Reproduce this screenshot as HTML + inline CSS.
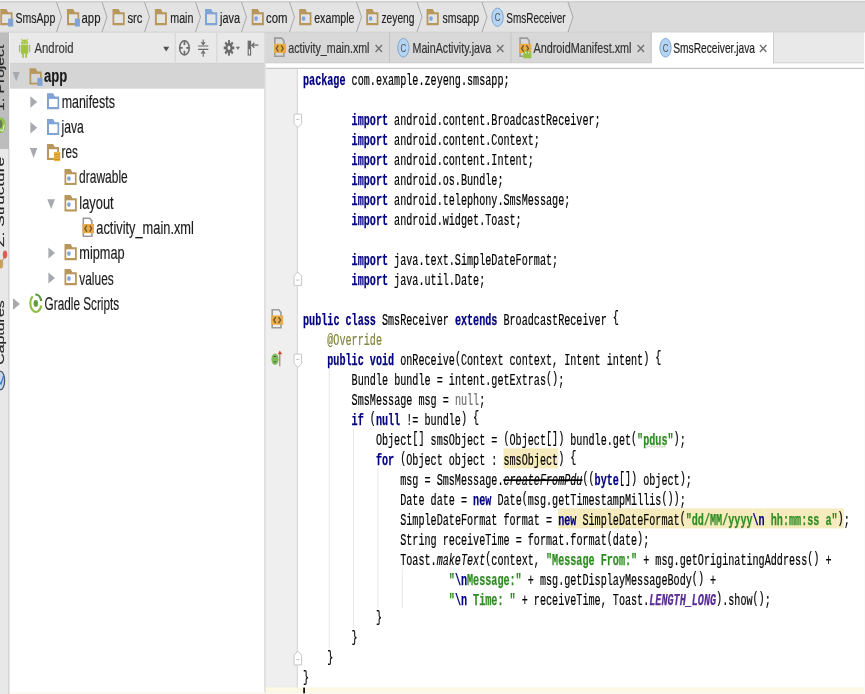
<!DOCTYPE html>
<html><head><meta charset="utf-8"><style>
html,body{margin:0;padding:0;width:865px;height:694px;overflow:hidden;background:#fff}
svg{display:block;filter:blur(0.35px)}
text{white-space:pre}
</style></head><body><svg width="865" height="694" viewBox="0 0 865 694"><rect x="0" y="0" width="865" height="694" fill="#ffffff" />
<rect x="0" y="0" width="865" height="32.5" fill="#dadada" />
<path d="M0 2.5 H567 L572.6 17.5 L567 32.5 H0 Z" fill="#e3e3e3"/>
<line x1="0" y1="0.6" x2="865" y2="0.6" stroke="#f2f2f2" stroke-width="1.2" />
<line x1="0" y1="1.9" x2="865" y2="1.9" stroke="#cdcdcd" stroke-width="1.2" />
<line x1="0" y1="32.3" x2="865" y2="32.3" stroke="#c6c6c6" stroke-width="1" />
<rect x="0" y="32.5" width="9" height="694" fill="#e8e8e8" />
<rect x="0" y="32.5" width="8.6" height="116.5" fill="#bdbdbd" />
<line x1="8.6" y1="32.5" x2="8.6" y2="149" stroke="#b4b4b4" stroke-width="0.9" />
<line x1="8.9" y1="149" x2="8.9" y2="694" stroke="#d2d2d2" stroke-width="1.5" />
<line x1="9.9" y1="32.5" x2="9.9" y2="694" stroke="#f0f0f0" stroke-width="0.8" />
<rect x="10" y="32.5" width="254.5" height="31" fill="#e9e9e9" />
<line x1="10" y1="63.4" x2="264.5" y2="63.4" stroke="#c8c8c8" stroke-width="1" />
<rect x="10" y="63.9" width="254.5" height="694" fill="#ffffff" />
<rect x="10" y="63.9" width="254.5" height="24.8" fill="#d5d5d5" />
<line x1="265" y1="32.5" x2="265" y2="694" stroke="#d4d4d4" stroke-width="1.5" />
<rect x="265.7" y="32.5" width="865" height="30.5" fill="#d8d8d8" />
<rect x="651.5" y="32.5" width="122" height="31" fill="#ffffff" />
<rect x="773.5" y="32.5" width="865" height="30.5" fill="#e9e9e9" />
<line x1="773.5" y1="63" x2="865" y2="63" stroke="#c8c8c8" stroke-width="1" />
<line x1="389.5" y1="32.5" x2="389.5" y2="63" stroke="#c4c4c4" stroke-width="1" />
<line x1="511" y1="32.5" x2="511" y2="63" stroke="#c4c4c4" stroke-width="1" />
<line x1="651.2" y1="32.5" x2="651.2" y2="63" stroke="#c4c4c4" stroke-width="1" />
<line x1="265.7" y1="63" x2="651.5" y2="63" stroke="#c8c8c8" stroke-width="1" />
<rect x="265.7" y="63.5" width="865" height="4.5" fill="#ffffff" />
<line x1="265.7" y1="68.3" x2="865" y2="68.3" stroke="#c6c6c6" stroke-width="1.3" />
<rect x="265.7" y="69" width="31.5" height="694" fill="#efefef" />
<line x1="297.3" y1="69" x2="297.3" y2="694" stroke="#d2d2d2" stroke-width="1" />
<rect x="265.7" y="687.5" width="865" height="5.2" fill="#fdf8e3" />
<rect x="265.7" y="692.7" width="865" height="2" fill="#fbfaf2" />
<rect x="10" y="692.3" width="255" height="1.7" fill="#fdfbef" />
<line x1="864.5" y1="32.5" x2="864.5" y2="694" stroke="#fbfbfb" stroke-width="1" />
<line x1="773.5" y1="32.5" x2="773.5" y2="63.5" stroke="#cdcdcd" stroke-width="1" />
<text x="15.50" y="22.7" textLength="39.80" lengthAdjust="spacingAndGlyphs" font-family="Liberation Sans" font-size="15.5" font-weight="normal" fill="#202020" stroke="#202020" stroke-width="0.15">SmsApp</text>
<text x="81.50" y="22.7" textLength="19.00" lengthAdjust="spacingAndGlyphs" font-family="Liberation Sans" font-size="15.5" font-weight="normal" fill="#202020" stroke="#202020" stroke-width="0.15">app</text>
<text x="127.50" y="22.7" textLength="15.00" lengthAdjust="spacingAndGlyphs" font-family="Liberation Sans" font-size="15.5" font-weight="normal" fill="#202020" stroke="#202020" stroke-width="0.15">src</text>
<text x="170.30" y="22.7" textLength="23.10" lengthAdjust="spacingAndGlyphs" font-family="Liberation Sans" font-size="15.5" font-weight="normal" fill="#202020" stroke="#202020" stroke-width="0.15">main</text>
<text x="220.10" y="22.7" textLength="20.10" lengthAdjust="spacingAndGlyphs" font-family="Liberation Sans" font-size="15.5" font-weight="normal" fill="#202020" stroke="#202020" stroke-width="0.15">java</text>
<text x="266.00" y="22.7" textLength="21.50" lengthAdjust="spacingAndGlyphs" font-family="Liberation Sans" font-size="15.5" font-weight="normal" fill="#202020" stroke="#202020" stroke-width="0.15">com</text>
<text x="314.20" y="22.7" textLength="40.30" lengthAdjust="spacingAndGlyphs" font-family="Liberation Sans" font-size="15.5" font-weight="normal" fill="#202020" stroke="#202020" stroke-width="0.15">example</text>
<text x="381.50" y="22.7" textLength="33.00" lengthAdjust="spacingAndGlyphs" font-family="Liberation Sans" font-size="15.5" font-weight="normal" fill="#202020" stroke="#202020" stroke-width="0.15">zeyeng</text>
<text x="442.50" y="22.7" textLength="36.70" lengthAdjust="spacingAndGlyphs" font-family="Liberation Sans" font-size="15.5" font-weight="normal" fill="#202020" stroke="#202020" stroke-width="0.15">smsapp</text>
<text x="506.30" y="22.7" textLength="59.20" lengthAdjust="spacingAndGlyphs" font-family="Liberation Sans" font-size="15.5" font-weight="normal" fill="#202020" stroke="#202020" stroke-width="0.15">SmsReceiver</text>
<polyline points="56.5,2 61.5,17 56.5,32" fill="none" stroke="#a8a8a8" stroke-width="1"/>
<polyline points="102.0,2 107.0,17 102.0,32" fill="none" stroke="#a8a8a8" stroke-width="1"/>
<polyline points="144.5,2 149.5,17 144.5,32" fill="none" stroke="#a8a8a8" stroke-width="1"/>
<polyline points="195.5,2 200.5,17 195.5,32" fill="none" stroke="#a8a8a8" stroke-width="1"/>
<polyline points="241.5,2 246.5,17 241.5,32" fill="none" stroke="#a8a8a8" stroke-width="1"/>
<polyline points="289.5,2 294.5,17 289.5,32" fill="none" stroke="#a8a8a8" stroke-width="1"/>
<polyline points="356.5,2 361.5,17 356.5,32" fill="none" stroke="#a8a8a8" stroke-width="1"/>
<polyline points="417.0,2 422.0,17 417.0,32" fill="none" stroke="#a8a8a8" stroke-width="1"/>
<polyline points="482.0,2 487.0,17 482.0,32" fill="none" stroke="#a8a8a8" stroke-width="1"/>
<polyline points="568.0,2 573.0,17 568.0,32" fill="none" stroke="#a8a8a8" stroke-width="1"/>
<path d="M0.3 9 H6.3999999999999995 L8.2 12.2 H12.5 V25.2 H0.3 Z M2.3 14.6 V23.0 H10.6 V14.6 Z" fill="#b7975c" fill-rule="evenodd"/>
<rect x="2.3" y="14.6" width="8.299999999999999" height="8.399999999999999" fill="#e4e4e4"/>
<rect x="8.1" y="18.6" width="5.1" height="7.9" fill="#7ea3d4"/>
<path d="M67 9 H73.1 L74.89999999999999 12.2 H79.2 V25.2 H67 Z M69 14.6 V23.0 H77.3 V14.6 Z" fill="#b7975c" fill-rule="evenodd"/>
<rect x="69" y="14.6" width="8.299999999999999" height="8.399999999999999" fill="#e4e4e4"/>
<rect x="74.8" y="18.6" width="5.1" height="7.9" fill="#7ea3d4"/>
<path d="M112.5 9 H118.6 L120.39999999999999 12.2 H124.7 V25.2 H112.5 Z M114.5 14.6 V23.0 H122.8 V14.6 Z" fill="#b7975c" fill-rule="evenodd"/>
<rect x="114.5" y="14.6" width="8.299999999999999" height="8.399999999999999" fill="#e4e4e4"/>
<path d="M154.9 9 H160.9 L162.70000000000002 12.2 H166.9 V25.2 H154.9 Z M156.9 14.6 V23.0 H165.0 V14.6 Z" fill="#b7975c" fill-rule="evenodd"/>
<rect x="156.9" y="14.6" width="8.1" height="8.399999999999999" fill="#e4e4e4"/>
<path d="M205 9 H211.1 L212.9 12.2 H217.2 V25.2 H205 Z M207 14.6 V23.0 H215.29999999999998 V14.6 Z" fill="#7ea3d4" fill-rule="evenodd"/>
<rect x="207" y="14.6" width="8.299999999999999" height="8.399999999999999" fill="#e4e4e4"/>
<path d="M251.7 9 H257.8 L259.6 12.2 H263.9 V25.2 H251.7 Z M253.7 14.6 V23.0 H262.0 V14.6 Z" fill="#b7975c" fill-rule="evenodd"/>
<rect x="253.7" y="14.6" width="8.299999999999999" height="8.399999999999999" fill="#e4e4e4"/>
<ellipse cx="256.09999999999997" cy="18.6" rx="1.8" ry="2.4" fill="#7fa6dc"/>
<path d="M299.2 9 H305.3 L307.1 12.2 H311.4 V25.2 H299.2 Z M301.2 14.6 V23.0 H309.5 V14.6 Z" fill="#b7975c" fill-rule="evenodd"/>
<rect x="301.2" y="14.6" width="8.299999999999999" height="8.399999999999999" fill="#e4e4e4"/>
<ellipse cx="303.59999999999997" cy="18.6" rx="1.8" ry="2.4" fill="#7fa6dc"/>
<path d="M366.2 9 H372.3 L374.1 12.2 H378.4 V25.2 H366.2 Z M368.2 14.6 V23.0 H376.5 V14.6 Z" fill="#b7975c" fill-rule="evenodd"/>
<rect x="368.2" y="14.6" width="8.299999999999999" height="8.399999999999999" fill="#e4e4e4"/>
<ellipse cx="370.59999999999997" cy="18.6" rx="1.8" ry="2.4" fill="#7fa6dc"/>
<path d="M426.6 9 H432.70000000000005 L434.50000000000006 12.2 H438.8 V25.2 H426.6 Z M428.6 14.6 V23.0 H436.90000000000003 V14.6 Z" fill="#b7975c" fill-rule="evenodd"/>
<rect x="428.6" y="14.6" width="8.299999999999999" height="8.399999999999999" fill="#e4e4e4"/>
<ellipse cx="431.0" cy="18.6" rx="1.8" ry="2.4" fill="#7fa6dc"/>
<ellipse cx="497.5" cy="17.25" rx="5.700000000000022" ry="9.15" fill="#b4d4f3" stroke="#80a6d4" stroke-width="1"/>
<text x="497.5" y="21.15" text-anchor="middle" font-family="Liberation Sans" font-size="11" fill="#505050" transform="translate(497.5 0) scale(0.72 1) translate(-497.5 0)">C</text>
<text x="34.50" y="53.2" textLength="39.10" lengthAdjust="spacingAndGlyphs" font-family="Liberation Sans" font-size="15" font-weight="normal" fill="#3a3a3a" stroke="#3a3a3a" stroke-width="0.2">Android</text>
<path d="M20.9 43.800000000000004 Q21.099999999999998 39.4 24.549999999999997 39.4 Q28.0 39.4 28.2 43.800000000000004 Z" fill="#a2c43f"/>
<path d="M22.099999999999998 40.300000000000004 L21.299999999999997 38.5 M27.0 40.300000000000004 L27.799999999999997 38.5" stroke="#a2c43f" stroke-width="0.8"/>
<circle cx="23.099999999999998" cy="41.7" r="0.6" fill="#d9e6b0"/><circle cx="26.0" cy="41.7" r="0.6" fill="#d9e6b0"/>
<rect x="20.9" y="44.6" width="7.3" height="9.1" fill="#a2c43f"/>
<rect x="18.9" y="44.800000000000004" width="1.3" height="7.2" rx="0.6" fill="#a2c43f"/>
<rect x="28.9" y="44.800000000000004" width="1.3" height="7.2" rx="0.6" fill="#a2c43f"/>
<rect x="22.2" y="53.1" width="1.7" height="4.7" fill="#a2c43f"/>
<rect x="25.299999999999997" y="53.1" width="1.7" height="4.7" fill="#a2c43f"/>
<path d="M163.2 46.8 H169.2 L166.2 51.6 Z" fill="#505050"/>
<line x1="175.2" y1="33" x2="175.2" y2="62.5" stroke="#d3d3d3" stroke-width="1" />
<line x1="216.8" y1="33" x2="216.8" y2="62.5" stroke="#d3d3d3" stroke-width="1" />
<ellipse cx="184.45" cy="47.9" rx="4.8" ry="7.1" fill="none" stroke="#6b6b6b" stroke-width="1.5"/>
<path d="M184.45 41 V45 M184.45 50.8 V54.8 M179.8 47.9 H182.6 M186.3 47.9 H189.1" stroke="#6b6b6b" stroke-width="1.7"/>
<path d="M198.1 46 H208.3 M198.1 49.4 H208.3" stroke="#6b6b6b" stroke-width="1.2"/>
<path d="M203.2 39.5 V44 M201.3 42.2 L203.2 44.6 L205.1 42.2 M203.2 56.7 V51.4 M201.3 53.6 L203.2 51 L205.1 53.6" stroke="#6b6b6b" stroke-width="1.1" fill="none"/>
<g transform="translate(229 47.9) scale(0.68 1)"><circle r="5.2" fill="#6b6b6b"/><rect x="-1.4" y="-7.8" width="2.8" height="3.5" fill="#6b6b6b" transform="rotate(0)"/><rect x="-1.4" y="-7.8" width="2.8" height="3.5" fill="#6b6b6b" transform="rotate(45)"/><rect x="-1.4" y="-7.8" width="2.8" height="3.5" fill="#6b6b6b" transform="rotate(90)"/><rect x="-1.4" y="-7.8" width="2.8" height="3.5" fill="#6b6b6b" transform="rotate(135)"/><rect x="-1.4" y="-7.8" width="2.8" height="3.5" fill="#6b6b6b" transform="rotate(180)"/><rect x="-1.4" y="-7.8" width="2.8" height="3.5" fill="#6b6b6b" transform="rotate(225)"/><rect x="-1.4" y="-7.8" width="2.8" height="3.5" fill="#6b6b6b" transform="rotate(270)"/><rect x="-1.4" y="-7.8" width="2.8" height="3.5" fill="#6b6b6b" transform="rotate(315)"/><circle r="2.1" fill="#e9e9e9"/></g>
<path d="M235.8 46.8 H240 L237.9 49.7 Z" fill="#6b6b6b"/>
<rect x="248.2" y="41.2" width="2.4" height="13.8" fill="none" stroke="#6b6b6b" stroke-width="1.1"/>
<rect x="248.2" y="41.2" width="2.4" height="8" fill="#6b6b6b"/>
<path d="M251.8 45.2 H258.4 M254.4 42.7 L251.8 45.2 L254.4 47.7" stroke="#6b6b6b" stroke-width="1.2" fill="none"/>
<text transform="translate(4.3 111) rotate(-90) scale(1 0.78)" textLength="66.3" lengthAdjust="spacingAndGlyphs" font-family="Liberation Sans" font-size="15" fill="#262626" stroke="#262626" stroke-width="0.2">1: Project</text>
<text transform="translate(4.3 246.9) rotate(-90) scale(1 0.78)" textLength="89.9" lengthAdjust="spacingAndGlyphs" font-family="Liberation Sans" font-size="15" fill="#262626" stroke="#262626" stroke-width="0.2">Z: Structure</text>
<text transform="translate(4.3 364.8) rotate(-90) scale(1 0.78)" textLength="64.5" lengthAdjust="spacingAndGlyphs" font-family="Liberation Sans" font-size="15" fill="#262626" stroke="#262626" stroke-width="0.2">Captures</text>
<ellipse cx="1.3" cy="125.2" rx="4.3" ry="7.8" fill="#8cc04c"/><ellipse cx="0.3" cy="124" rx="2" ry="4" fill="#6a7a5a"/><path d="M-0.5 129.5 L2.8 131 L4.3 124.5" fill="none" stroke="#f2f2f2" stroke-width="1"/>
<path d="M5 254 L1.5 264" stroke="#a08060" stroke-width="0.8"/><ellipse cx="5" cy="254.5" rx="2.2" ry="4" fill="#d8614e"/><ellipse cx="1" cy="264" rx="2.2" ry="4.5" fill="#caa060"/>
<ellipse cx="0.6" cy="380.5" rx="4" ry="9.2" fill="#c9d9ee" stroke="#4e5a6a" stroke-width="1.3"/><path d="M-1 381 L1 384 L3.5 376" fill="none" stroke="#3d78c8" stroke-width="1.2"/>
<text x="288.20" y="53.3" textLength="81.30" lengthAdjust="spacingAndGlyphs" font-family="Liberation Sans" font-size="15" font-weight="normal" fill="#333333" stroke="#333333" stroke-width="0.2">activity_main.xml</text>
<path d="M375.6 45 L382.0 52 M382.0 45 L375.6 52" stroke="#707070" stroke-width="1.35"/>
<text x="412.50" y="53.3" textLength="78.80" lengthAdjust="spacingAndGlyphs" font-family="Liberation Sans" font-size="15" font-weight="normal" fill="#333333" stroke="#333333" stroke-width="0.2">MainActivity.java</text>
<path d="M497 45 L503.4 52 M503.4 45 L497 52" stroke="#707070" stroke-width="1.35"/>
<text x="533.50" y="53.3" textLength="98.00" lengthAdjust="spacingAndGlyphs" font-family="Liberation Sans" font-size="15" font-weight="normal" fill="#333333" stroke="#333333" stroke-width="0.2">AndroidManifest.xml</text>
<path d="M637.6 45 L644.0 52 M644.0 45 L637.6 52" stroke="#707070" stroke-width="1.35"/>
<text x="673.30" y="53.3" textLength="81.70" lengthAdjust="spacingAndGlyphs" font-family="Liberation Sans" font-size="15" font-weight="normal" fill="#1e1e1e" stroke="#1e1e1e" stroke-width="0.2">SmsReceiver.java</text>
<path d="M760 45 L766.4 52 M766.4 45 L760 52" stroke="#707070" stroke-width="1.35"/>
<path d="M274.8 38.099999999999994 H281.7 L283.9 40.8 V56.3 H274.8 Z" fill="#d8d8d8" stroke="#9b9b9b" stroke-width="1.6"/>
<rect x="274" y="43.8" width="12.0" height="9.2" fill="#e9ab45"/>
<path d="M278.3 45.3 L276.3 48.4 L278.3 51.5 M281.2 45.3 L283.2 48.4 L281.2 51.5" fill="none" stroke="#6b5330" stroke-width="1.3"/>
<ellipse cx="403.4" cy="47.75" rx="5.6" ry="9.35" fill="#b4d4f3" stroke="#80a6d4" stroke-width="1"/>
<text x="403.4" y="51.65" text-anchor="middle" font-family="Liberation Sans" font-size="11" fill="#505050" transform="translate(403.4 0) scale(0.72 1) translate(-403.4 0)">C</text>
<path d="M520.0999999999999 38.099999999999994 H527.0 L529.1999999999999 40.8 V56.3 H520.0999999999999 Z" fill="#d8d8d8" stroke="#9b9b9b" stroke-width="1.6"/>
<rect x="519.3" y="43.8" width="12.0" height="9.2" fill="#e9ab45"/>
<path d="M523.5999999999999 45.3 L521.5999999999999 48.4 L523.5999999999999 51.5 M526.5 45.3 L528.5 48.4 L526.5 51.5" fill="none" stroke="#6b5330" stroke-width="1.3"/>
<path d="M523.3 58.3 V52.8 Q527.3 48.099999999999994 531.3 52.8 V58.3 Z" fill="#94c240"/>
<path d="M524.3 49.8 L523.5 48.5 M530.3 49.8 L531.0999999999999 48.5" stroke="#94c240" stroke-width="1"/>
<circle cx="525.8" cy="52.8" r="0.8" fill="#e8f0d8"/><circle cx="528.8" cy="52.8" r="0.8" fill="#e8f0d8"/>
<ellipse cx="665.5" cy="47.75" rx="5.6" ry="9.35" fill="#b4d4f3" stroke="#80a6d4" stroke-width="1"/>
<text x="665.5" y="51.65" text-anchor="middle" font-family="Liberation Sans" font-size="11" fill="#505050" transform="translate(665.5 0) scale(0.72 1) translate(-665.5 0)">C</text>
<text x="44.00" y="82.3" textLength="23.30" lengthAdjust="spacingAndGlyphs" font-family="Liberation Sans" font-size="17.5" font-weight="bold" fill="#1a1a1a" stroke="#1a1a1a" stroke-width="0.15">app</text>
<text x="61.70" y="107.58" textLength="53.20" lengthAdjust="spacingAndGlyphs" font-family="Liberation Sans" font-size="17.5" font-weight="normal" fill="#1a1a1a" stroke="#1a1a1a" stroke-width="0.15">manifests</text>
<text x="61.50" y="132.86" textLength="22.40" lengthAdjust="spacingAndGlyphs" font-family="Liberation Sans" font-size="17.5" font-weight="normal" fill="#1a1a1a" stroke="#1a1a1a" stroke-width="0.15">java</text>
<text x="61.50" y="158.14" textLength="16.30" lengthAdjust="spacingAndGlyphs" font-family="Liberation Sans" font-size="17.5" font-weight="normal" fill="#1a1a1a" stroke="#1a1a1a" stroke-width="0.15">res</text>
<text x="79.10" y="183.42000000000002" textLength="48.70" lengthAdjust="spacingAndGlyphs" font-family="Liberation Sans" font-size="17.5" font-weight="normal" fill="#1a1a1a" stroke="#1a1a1a" stroke-width="0.15">drawable</text>
<text x="79.30" y="208.7" textLength="34.40" lengthAdjust="spacingAndGlyphs" font-family="Liberation Sans" font-size="17.5" font-weight="normal" fill="#1a1a1a" stroke="#1a1a1a" stroke-width="0.15">layout</text>
<text x="96.30" y="233.98000000000002" textLength="97.60" lengthAdjust="spacingAndGlyphs" font-family="Liberation Sans" font-size="17.5" font-weight="normal" fill="#1a1a1a" stroke="#1a1a1a" stroke-width="0.15">activity_main.xml</text>
<text x="79.30" y="259.26" textLength="45.40" lengthAdjust="spacingAndGlyphs" font-family="Liberation Sans" font-size="17.5" font-weight="normal" fill="#1a1a1a" stroke="#1a1a1a" stroke-width="0.15">mipmap</text>
<text x="79.30" y="284.54" textLength="34.40" lengthAdjust="spacingAndGlyphs" font-family="Liberation Sans" font-size="17.5" font-weight="normal" fill="#1a1a1a" stroke="#1a1a1a" stroke-width="0.15">values</text>
<text x="44.60" y="309.82" textLength="74.60" lengthAdjust="spacingAndGlyphs" font-family="Liberation Sans" font-size="17.5" font-weight="normal" fill="#1a1a1a" stroke="#1a1a1a" stroke-width="0.15">Gradle Scripts</text>
<path d="M12.7 72 H19.7 L16.2 81.4 Z" fill="#a6a9ae"/>
<path d="M29.5 68.3 H35.65 L37.449999999999996 71.5 H41.8 V84.6 H29.5 Z M31.5 73.89999999999999 V82.39999999999999 H39.9 V73.89999999999999 Z" fill="#b7975c" fill-rule="evenodd"/>
<rect x="31.5" y="73.89999999999999" width="8.4" height="8.5" fill="#d5d5d5"/>
<rect x="37.4" y="77.89999999999999" width="5.1" height="7.9" fill="#7ea3d4"/>
<path d="M30.4 96.3 L37.2 102.0 L30.4 107.7 Z" fill="#a6a9ae"/>
<path d="M47 93.3 H53.1 L54.9 96.5 H59.2 V109.2 H47 Z M49 98.89999999999999 V107.0 H57.300000000000004 V98.89999999999999 Z" fill="#7ea3d4" fill-rule="evenodd"/>
<rect x="49" y="98.89999999999999" width="8.299999999999999" height="8.100000000000001" fill="#fff"/>
<path d="M30.4 122 L37.2 127.7 L30.4 133.4 Z" fill="#a6a9ae"/>
<path d="M47 119 H53.1 L54.9 122.2 H59.2 V135 H47 Z M49 124.6 V132.8 H57.300000000000004 V124.6 Z" fill="#7ea3d4" fill-rule="evenodd"/>
<rect x="49" y="124.6" width="8.299999999999999" height="8.2" fill="#fff"/>
<path d="M29.9 148.1 H37.3 L33.599999999999994 158 Z" fill="#a6a9ae"/>
<path d="M47 143.9 H53.0 L54.8 147.1 H59 V159.9 H47 Z M49 149.5 V157.70000000000002 H57.1 V149.5 Z" fill="#b7975c" fill-rule="evenodd"/>
<rect x="49" y="149.5" width="8.1" height="8.2" fill="#fff"/>
<rect x="54" y="151.9" width="6.3" height="9.2" fill="#eeb040"/>
<path d="M54.5 154.4 h5.5 M54.5 156.9 h5.5 M54.5 159.4 h5.5" stroke="#b98a30" stroke-width="0.8"/>
<path d="M64.5 169 H70.55 L72.35 172.2 H76.6 V184.9 H64.5 Z M66.5 174.6 V182.70000000000002 H74.69999999999999 V174.6 Z" fill="#b7975c" fill-rule="evenodd"/>
<rect x="66.5" y="174.6" width="8.2" height="8.100000000000001" fill="#fff"/>
<ellipse cx="68.9" cy="178.6" rx="1.8" ry="2.4" fill="#7fa6dc"/>
<path d="M47.3 199.3 H55 L51.15 209 Z" fill="#a6a9ae"/>
<path d="M64.5 195 H70.65 L72.45 198.2 H76.8 V211.4 H64.5 Z M66.5 200.6 V209.20000000000002 H74.89999999999999 V200.6 Z" fill="#b7975c" fill-rule="evenodd"/>
<rect x="66.5" y="200.6" width="8.4" height="8.599999999999998" fill="#fff"/>
<ellipse cx="68.9" cy="204.6" rx="1.8" ry="2.4" fill="#7fa6dc"/>
<path d="M83.3 218.3 H89.7 L91.9 221.0 V236.2 H83.3 Z" fill="#fff" stroke="#9b9b9b" stroke-width="1.6"/>
<rect x="82.5" y="224.0" width="11.5" height="9.2" fill="#e9ab45"/>
<path d="M86.8 225.5 L84.8 228.6 L86.8 231.7 M89.7 225.5 L91.7 228.6 L89.7 231.7" fill="none" stroke="#6b5330" stroke-width="1.3"/>
<path d="M48.4 247.5 L55 253.0 L48.4 258.5 Z" fill="#a6a9ae"/>
<path d="M64.5 244 H70.65 L72.45 247.2 H76.8 V260.2 H64.5 Z M66.5 249.6 V258.0 H74.89999999999999 V249.6 Z" fill="#b7975c" fill-rule="evenodd"/>
<rect x="66.5" y="249.6" width="8.4" height="8.399999999999999" fill="#fff"/>
<ellipse cx="68.9" cy="253.6" rx="1.8" ry="2.4" fill="#7fa6dc"/>
<path d="M48.4 272.5 L55 278.0 L48.4 283.5 Z" fill="#a6a9ae"/>
<path d="M64.5 269 H70.65 L72.45 272.2 H76.8 V285.2 H64.5 Z M66.5 274.6 V283.0 H74.89999999999999 V274.6 Z" fill="#b7975c" fill-rule="evenodd"/>
<rect x="66.5" y="274.6" width="8.4" height="8.399999999999999" fill="#fff"/>
<ellipse cx="68.9" cy="278.6" rx="1.8" ry="2.4" fill="#7fa6dc"/>
<path d="M13 298.3 L20 304.05 L13 309.8 Z" fill="#a6a9ae"/>
<path d="M35.41 294.68 A5.6 8.6 0 0 1 41.31 301.02" fill="none" stroke="#5a9a3a" stroke-width="2.3"/>
<path d="M41.31 305.48 A5.6 8.6 0 1 1 32.69 296.21" fill="none" stroke="#8cbf44" stroke-width="2.1"/>
<ellipse cx="35.8" cy="303.4" rx="2.2" ry="3.4" fill="#5e9e3c"/>
<path d="M272.2 309.8 H278.79999999999995 L280.99999999999994 312.5 V327.8 H272.2 Z" fill="#efefef" stroke="#9b9b9b" stroke-width="1.6"/>
<rect x="271.4" y="315.5" width="11.7" height="9.2" fill="#e9ab45"/>
<path d="M275.7 317 L273.7 320.1 L275.7 323.2 M278.59999999999997 317 L280.59999999999997 320.1 L278.59999999999997 323.2" fill="none" stroke="#6b5330" stroke-width="1.3"/>
<ellipse cx="275" cy="359.3" rx="3.6" ry="5.7" fill="#7dbb5a"/>
<path d="M273.7 356.5 h2.6 M273.7 361.8 h2.6" stroke="#555" stroke-width="1"/>
<rect x="279.1" y="353.5" width="1.3" height="12.8" fill="#b08878"/>
<path d="M277.8 354.2 L279.75 350.6 L282.3 354.2 Z" fill="#d44a3a"/>
<path d="M294.1 114.1 H301.6 V123.5 L297.85 127.7 L294.1 123.5 Z" fill="#fff" stroke="#c8c8c8" stroke-width="1"/>
<line x1="296.3" y1="119.39999999999999" x2="299.40000000000003" y2="119.39999999999999" stroke="#c0c0c0" stroke-width="1"/>
<path d="M294.1 285.4 H301.6 V276.0 L297.85 271.8 L294.1 276.0 Z" fill="#fff" stroke="#c8c8c8" stroke-width="1"/>
<line x1="296.3" y1="280.09999999999997" x2="299.40000000000003" y2="280.09999999999997" stroke="#c0c0c0" stroke-width="1"/>
<path d="M294.1 354.1 H301.6 V363.3 L297.85 367.5 L294.1 363.3 Z" fill="#fff" stroke="#c8c8c8" stroke-width="1"/>
<line x1="296.3" y1="359.40000000000003" x2="299.40000000000003" y2="359.40000000000003" stroke="#c0c0c0" stroke-width="1"/>
<path d="M294.1 664.9 H301.6 V655.2 L297.85 651 L294.1 655.2 Z" fill="#fff" stroke="#c8c8c8" stroke-width="1"/>
<line x1="296.3" y1="659.6" x2="299.40000000000003" y2="659.6" stroke="#c0c0c0" stroke-width="1"/>
<line x1="329.3" y1="368.4" x2="329.3" y2="648.4" stroke="#e6e6e6" stroke-width="1" />
<line x1="353.6" y1="428.4" x2="353.6" y2="628.4" stroke="#e6e6e6" stroke-width="1" />
<line x1="377.9" y1="468.4" x2="377.9" y2="608.4" stroke="#e6e6e6" stroke-width="1" />
<line x1="402.2" y1="568.4" x2="402.2" y2="608.4" stroke="#e6e6e6" stroke-width="1" />
<text x="303.00" y="84.50" textLength="42.52" lengthAdjust="spacingAndGlyphs" font-family="Liberation Mono" font-size="16" fill="#000080" stroke="#000080" stroke-width="0.25" font-weight="bold" xml:space="preserve">package</text>
<text x="345.52" y="84.50" textLength="164.03" lengthAdjust="spacingAndGlyphs" font-family="Liberation Mono" font-size="16" fill="#000" stroke="#000" stroke-width="0.2"  xml:space="preserve"> com.example.zeyeng.smsapp;</text>
<text x="351.60" y="124.50" textLength="36.45" lengthAdjust="spacingAndGlyphs" font-family="Liberation Mono" font-size="16" fill="#000080" stroke="#000080" stroke-width="0.25" font-weight="bold" xml:space="preserve">import</text>
<text x="388.05" y="124.50" textLength="212.62" lengthAdjust="spacingAndGlyphs" font-family="Liberation Mono" font-size="16" fill="#000" stroke="#000" stroke-width="0.2"  xml:space="preserve"> android.content.BroadcastReceiver;</text>
<text x="351.60" y="144.50" textLength="36.45" lengthAdjust="spacingAndGlyphs" font-family="Liberation Mono" font-size="16" fill="#000080" stroke="#000080" stroke-width="0.25" font-weight="bold" xml:space="preserve">import</text>
<text x="388.05" y="144.50" textLength="151.88" lengthAdjust="spacingAndGlyphs" font-family="Liberation Mono" font-size="16" fill="#000" stroke="#000" stroke-width="0.2"  xml:space="preserve"> android.content.Context;</text>
<text x="351.60" y="164.50" textLength="36.45" lengthAdjust="spacingAndGlyphs" font-family="Liberation Mono" font-size="16" fill="#000080" stroke="#000080" stroke-width="0.25" font-weight="bold" xml:space="preserve">import</text>
<text x="388.05" y="164.50" textLength="145.80" lengthAdjust="spacingAndGlyphs" font-family="Liberation Mono" font-size="16" fill="#000" stroke="#000" stroke-width="0.2"  xml:space="preserve"> android.content.Intent;</text>
<text x="351.60" y="184.50" textLength="36.45" lengthAdjust="spacingAndGlyphs" font-family="Liberation Mono" font-size="16" fill="#000080" stroke="#000080" stroke-width="0.25" font-weight="bold" xml:space="preserve">import</text>
<text x="388.05" y="184.50" textLength="115.42" lengthAdjust="spacingAndGlyphs" font-family="Liberation Mono" font-size="16" fill="#000" stroke="#000" stroke-width="0.2"  xml:space="preserve"> android.os.Bundle;</text>
<text x="351.60" y="204.50" textLength="36.45" lengthAdjust="spacingAndGlyphs" font-family="Liberation Mono" font-size="16" fill="#000080" stroke="#000080" stroke-width="0.25" font-weight="bold" xml:space="preserve">import</text>
<text x="388.05" y="204.50" textLength="182.25" lengthAdjust="spacingAndGlyphs" font-family="Liberation Mono" font-size="16" fill="#000" stroke="#000" stroke-width="0.2"  xml:space="preserve"> android.telephony.SmsMessage;</text>
<text x="351.60" y="224.50" textLength="36.45" lengthAdjust="spacingAndGlyphs" font-family="Liberation Mono" font-size="16" fill="#000080" stroke="#000080" stroke-width="0.25" font-weight="bold" xml:space="preserve">import</text>
<text x="388.05" y="224.50" textLength="133.65" lengthAdjust="spacingAndGlyphs" font-family="Liberation Mono" font-size="16" fill="#000" stroke="#000" stroke-width="0.2"  xml:space="preserve"> android.widget.Toast;</text>
<text x="351.60" y="264.50" textLength="36.45" lengthAdjust="spacingAndGlyphs" font-family="Liberation Mono" font-size="16" fill="#000080" stroke="#000080" stroke-width="0.25" font-weight="bold" xml:space="preserve">import</text>
<text x="388.05" y="264.50" textLength="170.10" lengthAdjust="spacingAndGlyphs" font-family="Liberation Mono" font-size="16" fill="#000" stroke="#000" stroke-width="0.2"  xml:space="preserve"> java.text.SimpleDateFormat;</text>
<text x="351.60" y="284.50" textLength="36.45" lengthAdjust="spacingAndGlyphs" font-family="Liberation Mono" font-size="16" fill="#000080" stroke="#000080" stroke-width="0.25" font-weight="bold" xml:space="preserve">import</text>
<text x="388.05" y="284.50" textLength="97.20" lengthAdjust="spacingAndGlyphs" font-family="Liberation Mono" font-size="16" fill="#000" stroke="#000" stroke-width="0.2"  xml:space="preserve"> java.util.Date;</text>
<text x="303.00" y="324.50" textLength="36.45" lengthAdjust="spacingAndGlyphs" font-family="Liberation Mono" font-size="16" fill="#000080" stroke="#000080" stroke-width="0.25" font-weight="bold" xml:space="preserve">public</text>
<text x="345.52" y="324.50" textLength="30.38" lengthAdjust="spacingAndGlyphs" font-family="Liberation Mono" font-size="16" fill="#000080" stroke="#000080" stroke-width="0.25" font-weight="bold" xml:space="preserve">class</text>
<text x="375.90" y="324.50" textLength="78.98" lengthAdjust="spacingAndGlyphs" font-family="Liberation Mono" font-size="16" fill="#000" stroke="#000" stroke-width="0.2"  xml:space="preserve"> SmsReceiver </text>
<text x="454.88" y="324.50" textLength="42.52" lengthAdjust="spacingAndGlyphs" font-family="Liberation Mono" font-size="16" fill="#000080" stroke="#000080" stroke-width="0.25" font-weight="bold" xml:space="preserve">extends</text>
<text x="497.40" y="324.50" textLength="121.50" lengthAdjust="spacingAndGlyphs" font-family="Liberation Mono" font-size="16" fill="#000" stroke="#000" stroke-width="0.2"  xml:space="preserve"> BroadcastReceiver  </text>
<text x="612.82" y="322.10" textLength="6.08" lengthAdjust="spacingAndGlyphs" font-family="Liberation Mono" font-size="16" fill="#000" stroke="#000" stroke-width="0.2" >{</text>
<text x="327.30" y="344.50" textLength="54.68" lengthAdjust="spacingAndGlyphs" font-family="Liberation Mono" font-size="16" fill="#80863a" stroke="#80863a" stroke-width="0.2"  xml:space="preserve">@Override</text>
<text x="327.30" y="364.50" textLength="36.45" lengthAdjust="spacingAndGlyphs" font-family="Liberation Mono" font-size="16" fill="#000080" stroke="#000080" stroke-width="0.25" font-weight="bold" xml:space="preserve">public</text>
<text x="369.82" y="364.50" textLength="24.30" lengthAdjust="spacingAndGlyphs" font-family="Liberation Mono" font-size="16" fill="#000080" stroke="#000080" stroke-width="0.25" font-weight="bold" xml:space="preserve">void</text>
<text x="394.12" y="364.50" textLength="267.30" lengthAdjust="spacingAndGlyphs" font-family="Liberation Mono" font-size="16" fill="#000" stroke="#000" stroke-width="0.2"  xml:space="preserve"> onReceive Context context, Intent intent   </text>
<text x="454.88" y="363.00" textLength="6.08" lengthAdjust="spacingAndGlyphs" font-family="Liberation Mono" font-size="16" fill="#000" stroke="#000" stroke-width="0.2" >(</text>
<text x="643.20" y="363.00" textLength="6.08" lengthAdjust="spacingAndGlyphs" font-family="Liberation Mono" font-size="16" fill="#000" stroke="#000" stroke-width="0.2" >)</text>
<text x="655.35" y="362.10" textLength="6.08" lengthAdjust="spacingAndGlyphs" font-family="Liberation Mono" font-size="16" fill="#000" stroke="#000" stroke-width="0.2" >{</text>
<text x="303.00" y="384.50" textLength="261.23" lengthAdjust="spacingAndGlyphs" font-family="Liberation Mono" font-size="16" fill="#000" stroke="#000" stroke-width="0.2"  xml:space="preserve">        Bundle bundle = intent.getExtras  ;</text>
<text x="546.00" y="383.00" textLength="6.08" lengthAdjust="spacingAndGlyphs" font-family="Liberation Mono" font-size="16" fill="#000" stroke="#000" stroke-width="0.2" >(</text>
<text x="552.08" y="383.00" textLength="6.08" lengthAdjust="spacingAndGlyphs" font-family="Liberation Mono" font-size="16" fill="#000" stroke="#000" stroke-width="0.2" >)</text>
<text x="303.00" y="404.50" textLength="151.88" lengthAdjust="spacingAndGlyphs" font-family="Liberation Mono" font-size="16" fill="#000" stroke="#000" stroke-width="0.2"  xml:space="preserve">        SmsMessage msg = </text>
<text x="454.88" y="404.50" textLength="24.30" lengthAdjust="spacingAndGlyphs" font-family="Liberation Mono" font-size="16" fill="#6f6f6f" stroke="#6f6f6f" stroke-width="0.2"  xml:space="preserve">null</text>
<text x="479.18" y="404.50" textLength="6.08" lengthAdjust="spacingAndGlyphs" font-family="Liberation Mono" font-size="16" fill="#000" stroke="#000" stroke-width="0.2"  xml:space="preserve">;</text>
<text x="351.60" y="424.50" textLength="12.15" lengthAdjust="spacingAndGlyphs" font-family="Liberation Mono" font-size="16" fill="#000080" stroke="#000080" stroke-width="0.25" font-weight="bold" xml:space="preserve">if</text>
<text x="369.82" y="423.00" textLength="6.08" lengthAdjust="spacingAndGlyphs" font-family="Liberation Mono" font-size="16" fill="#000" stroke="#000" stroke-width="0.2" >(</text>
<text x="375.90" y="424.50" textLength="24.30" lengthAdjust="spacingAndGlyphs" font-family="Liberation Mono" font-size="16" fill="#000080" stroke="#000080" stroke-width="0.25" font-weight="bold" xml:space="preserve">null</text>
<text x="400.20" y="424.50" textLength="78.98" lengthAdjust="spacingAndGlyphs" font-family="Liberation Mono" font-size="16" fill="#000" stroke="#000" stroke-width="0.2"  xml:space="preserve"> != bundle   </text>
<text x="460.95" y="423.00" textLength="6.08" lengthAdjust="spacingAndGlyphs" font-family="Liberation Mono" font-size="16" fill="#000" stroke="#000" stroke-width="0.2" >)</text>
<text x="473.10" y="422.10" textLength="6.08" lengthAdjust="spacingAndGlyphs" font-family="Liberation Mono" font-size="16" fill="#000" stroke="#000" stroke-width="0.2" >{</text>
<text x="303.00" y="444.50" textLength="334.12" lengthAdjust="spacingAndGlyphs" font-family="Liberation Mono" font-size="16" fill="#000" stroke="#000" stroke-width="0.2"  xml:space="preserve">            Object   smsObject =  Object    bundle.get </text>
<text x="412.35" y="442.70" textLength="6.08" lengthAdjust="spacingAndGlyphs" font-family="Liberation Mono" font-size="16" fill="#000" stroke="#000" stroke-width="0.2" >[</text>
<text x="418.43" y="442.70" textLength="6.08" lengthAdjust="spacingAndGlyphs" font-family="Liberation Mono" font-size="16" fill="#000" stroke="#000" stroke-width="0.2" >]</text>
<text x="503.48" y="443.00" textLength="6.08" lengthAdjust="spacingAndGlyphs" font-family="Liberation Mono" font-size="16" fill="#000" stroke="#000" stroke-width="0.2" >(</text>
<text x="546.00" y="442.70" textLength="6.08" lengthAdjust="spacingAndGlyphs" font-family="Liberation Mono" font-size="16" fill="#000" stroke="#000" stroke-width="0.2" >[</text>
<text x="552.08" y="442.70" textLength="6.08" lengthAdjust="spacingAndGlyphs" font-family="Liberation Mono" font-size="16" fill="#000" stroke="#000" stroke-width="0.2" >]</text>
<text x="558.15" y="443.00" textLength="6.08" lengthAdjust="spacingAndGlyphs" font-family="Liberation Mono" font-size="16" fill="#000" stroke="#000" stroke-width="0.2" >)</text>
<text x="631.05" y="443.00" textLength="6.08" lengthAdjust="spacingAndGlyphs" font-family="Liberation Mono" font-size="16" fill="#000" stroke="#000" stroke-width="0.2" >(</text>
<text x="637.12" y="444.50" textLength="36.45" lengthAdjust="spacingAndGlyphs" font-family="Liberation Mono" font-size="16" fill="#2f8c22" stroke="#2f8c22" stroke-width="0.25" font-weight="bold" xml:space="preserve">&quot;pdus&quot;</text>
<text x="673.58" y="444.50" textLength="12.15" lengthAdjust="spacingAndGlyphs" font-family="Liberation Mono" font-size="16" fill="#000" stroke="#000" stroke-width="0.2"  xml:space="preserve"> ;</text>
<text x="673.58" y="443.00" textLength="6.08" lengthAdjust="spacingAndGlyphs" font-family="Liberation Mono" font-size="16" fill="#000" stroke="#000" stroke-width="0.2" >)</text>
<rect x="503.475" y="448.4" width="54.675000000000004" height="20" fill="#f6ebbc" />
<text x="375.90" y="464.50" textLength="18.23" lengthAdjust="spacingAndGlyphs" font-family="Liberation Mono" font-size="16" fill="#000080" stroke="#000080" stroke-width="0.25" font-weight="bold" xml:space="preserve">for</text>
<text x="394.12" y="464.50" textLength="109.35" lengthAdjust="spacingAndGlyphs" font-family="Liberation Mono" font-size="16" fill="#000" stroke="#000" stroke-width="0.2"  xml:space="preserve">  Object object : </text>
<text x="400.20" y="463.00" textLength="6.08" lengthAdjust="spacingAndGlyphs" font-family="Liberation Mono" font-size="16" fill="#000" stroke="#000" stroke-width="0.2" >(</text>
<text x="503.48" y="464.50" textLength="54.68" lengthAdjust="spacingAndGlyphs" font-family="Liberation Mono" font-size="16" fill="#000" stroke="#000" stroke-width="0.2"  xml:space="preserve">smsObject</text>
<text x="558.15" y="463.00" textLength="6.08" lengthAdjust="spacingAndGlyphs" font-family="Liberation Mono" font-size="16" fill="#000" stroke="#000" stroke-width="0.2" >)</text>
<text x="570.30" y="462.10" textLength="6.08" lengthAdjust="spacingAndGlyphs" font-family="Liberation Mono" font-size="16" fill="#000" stroke="#000" stroke-width="0.2" >{</text>
<text x="303.00" y="484.50" textLength="200.47" lengthAdjust="spacingAndGlyphs" font-family="Liberation Mono" font-size="16" fill="#000" stroke="#000" stroke-width="0.2"  xml:space="preserve">                msg = SmsMessage.</text>
<text x="503.48" y="484.50" textLength="78.98" lengthAdjust="spacingAndGlyphs" font-family="Liberation Mono" font-size="16" fill="#000" stroke="#000" stroke-width="0.2" font-style="italic" text-decoration="line-through" xml:space="preserve">createFromPdu</text>
<text x="582.45" y="483.00" textLength="6.08" lengthAdjust="spacingAndGlyphs" font-family="Liberation Mono" font-size="16" fill="#000" stroke="#000" stroke-width="0.2" >(</text>
<text x="588.53" y="483.00" textLength="6.08" lengthAdjust="spacingAndGlyphs" font-family="Liberation Mono" font-size="16" fill="#000" stroke="#000" stroke-width="0.2" >(</text>
<text x="594.60" y="484.50" textLength="24.30" lengthAdjust="spacingAndGlyphs" font-family="Liberation Mono" font-size="16" fill="#000080" stroke="#000080" stroke-width="0.25" font-weight="bold" xml:space="preserve">byte</text>
<text x="618.90" y="484.50" textLength="72.90" lengthAdjust="spacingAndGlyphs" font-family="Liberation Mono" font-size="16" fill="#000" stroke="#000" stroke-width="0.2"  xml:space="preserve">    object ;</text>
<text x="618.90" y="482.70" textLength="6.08" lengthAdjust="spacingAndGlyphs" font-family="Liberation Mono" font-size="16" fill="#000" stroke="#000" stroke-width="0.2" >[</text>
<text x="624.98" y="482.70" textLength="6.08" lengthAdjust="spacingAndGlyphs" font-family="Liberation Mono" font-size="16" fill="#000" stroke="#000" stroke-width="0.2" >]</text>
<text x="631.05" y="483.00" textLength="6.08" lengthAdjust="spacingAndGlyphs" font-family="Liberation Mono" font-size="16" fill="#000" stroke="#000" stroke-width="0.2" >)</text>
<text x="679.65" y="483.00" textLength="6.08" lengthAdjust="spacingAndGlyphs" font-family="Liberation Mono" font-size="16" fill="#000" stroke="#000" stroke-width="0.2" >)</text>
<text x="303.00" y="504.50" textLength="170.10" lengthAdjust="spacingAndGlyphs" font-family="Liberation Mono" font-size="16" fill="#000" stroke="#000" stroke-width="0.2"  xml:space="preserve">                Date date = </text>
<text x="473.10" y="504.50" textLength="18.23" lengthAdjust="spacingAndGlyphs" font-family="Liberation Mono" font-size="16" fill="#000080" stroke="#000080" stroke-width="0.25" font-weight="bold" xml:space="preserve">new</text>
<text x="491.33" y="504.50" textLength="194.40" lengthAdjust="spacingAndGlyphs" font-family="Liberation Mono" font-size="16" fill="#000" stroke="#000" stroke-width="0.2"  xml:space="preserve"> Date msg.getTimestampMillis   ;</text>
<text x="521.70" y="503.00" textLength="6.08" lengthAdjust="spacingAndGlyphs" font-family="Liberation Mono" font-size="16" fill="#000" stroke="#000" stroke-width="0.2" >(</text>
<text x="661.43" y="503.00" textLength="6.08" lengthAdjust="spacingAndGlyphs" font-family="Liberation Mono" font-size="16" fill="#000" stroke="#000" stroke-width="0.2" >(</text>
<text x="667.50" y="503.00" textLength="6.08" lengthAdjust="spacingAndGlyphs" font-family="Liberation Mono" font-size="16" fill="#000" stroke="#000" stroke-width="0.2" >)</text>
<text x="673.58" y="503.00" textLength="6.08" lengthAdjust="spacingAndGlyphs" font-family="Liberation Mono" font-size="16" fill="#000" stroke="#000" stroke-width="0.2" >)</text>
<rect x="558.15" y="508.4" width="18.225" height="20" fill="#f6ebbc" />
<rect x="576.375" y="508.4" width="109.35000000000001" height="20" fill="#f6ebbc" />
<rect x="685.725" y="508.4" width="66.825" height="20" fill="#f6ebbc" />
<rect x="752.55" y="508.4" width="12.15" height="20" fill="#f6ebbc" />
<rect x="764.7" y="508.4" width="72.9" height="20" fill="#f6ebbc" />
<rect x="837.6" y="508.4" width="6.075" height="20" fill="#f6ebbc" />
<text x="303.00" y="524.50" textLength="255.15" lengthAdjust="spacingAndGlyphs" font-family="Liberation Mono" font-size="16" fill="#000" stroke="#000" stroke-width="0.2"  xml:space="preserve">                SimpleDateFormat format = </text>
<text x="558.15" y="524.50" textLength="18.23" lengthAdjust="spacingAndGlyphs" font-family="Liberation Mono" font-size="16" fill="#000080" stroke="#000080" stroke-width="0.25" font-weight="bold" xml:space="preserve">new</text>
<text x="576.38" y="524.50" textLength="109.35" lengthAdjust="spacingAndGlyphs" font-family="Liberation Mono" font-size="16" fill="#000" stroke="#000" stroke-width="0.2"  xml:space="preserve"> SimpleDateFormat </text>
<text x="679.65" y="523.00" textLength="6.08" lengthAdjust="spacingAndGlyphs" font-family="Liberation Mono" font-size="16" fill="#000" stroke="#000" stroke-width="0.2" >(</text>
<text x="685.73" y="524.50" textLength="66.83" lengthAdjust="spacingAndGlyphs" font-family="Liberation Mono" font-size="16" fill="#2f8c22" stroke="#2f8c22" stroke-width="0.25" font-weight="bold" xml:space="preserve">&quot;dd/MM/yyyy</text>
<text x="752.55" y="524.50" textLength="12.15" lengthAdjust="spacingAndGlyphs" font-family="Liberation Mono" font-size="16" fill="#000080" stroke="#000080" stroke-width="0.25" font-weight="bold" xml:space="preserve">\n</text>
<text x="764.70" y="524.50" textLength="72.90" lengthAdjust="spacingAndGlyphs" font-family="Liberation Mono" font-size="16" fill="#2f8c22" stroke="#2f8c22" stroke-width="0.25" font-weight="bold" xml:space="preserve"> hh:mm:ss a&quot;</text>
<text x="837.60" y="523.00" textLength="6.08" lengthAdjust="spacingAndGlyphs" font-family="Liberation Mono" font-size="16" fill="#000" stroke="#000" stroke-width="0.2" >)</text>
<text x="843.68" y="524.50" textLength="6.08" lengthAdjust="spacingAndGlyphs" font-family="Liberation Mono" font-size="16" fill="#000" stroke="#000" stroke-width="0.2"  xml:space="preserve">;</text>
<text x="303.00" y="544.50" textLength="346.28" lengthAdjust="spacingAndGlyphs" font-family="Liberation Mono" font-size="16" fill="#000" stroke="#000" stroke-width="0.2"  xml:space="preserve">                String receiveTime = format.format date ;</text>
<text x="606.75" y="543.00" textLength="6.08" lengthAdjust="spacingAndGlyphs" font-family="Liberation Mono" font-size="16" fill="#000" stroke="#000" stroke-width="0.2" >(</text>
<text x="637.12" y="543.00" textLength="6.08" lengthAdjust="spacingAndGlyphs" font-family="Liberation Mono" font-size="16" fill="#000" stroke="#000" stroke-width="0.2" >)</text>
<text x="303.00" y="564.50" textLength="133.65" lengthAdjust="spacingAndGlyphs" font-family="Liberation Mono" font-size="16" fill="#000" stroke="#000" stroke-width="0.2"  xml:space="preserve">                Toast.</text>
<text x="436.65" y="564.50" textLength="48.60" lengthAdjust="spacingAndGlyphs" font-family="Liberation Mono" font-size="16" fill="#000" stroke="#000" stroke-width="0.2" font-style="italic" xml:space="preserve">makeText</text>
<text x="485.25" y="564.50" textLength="60.75" lengthAdjust="spacingAndGlyphs" font-family="Liberation Mono" font-size="16" fill="#000" stroke="#000" stroke-width="0.2"  xml:space="preserve"> context, </text>
<text x="485.25" y="563.00" textLength="6.08" lengthAdjust="spacingAndGlyphs" font-family="Liberation Mono" font-size="16" fill="#000" stroke="#000" stroke-width="0.2" >(</text>
<text x="546.00" y="564.50" textLength="91.12" lengthAdjust="spacingAndGlyphs" font-family="Liberation Mono" font-size="16" fill="#2f8c22" stroke="#2f8c22" stroke-width="0.25" font-weight="bold" xml:space="preserve">&quot;Message From:&quot;</text>
<text x="637.12" y="564.50" textLength="194.40" lengthAdjust="spacingAndGlyphs" font-family="Liberation Mono" font-size="16" fill="#000" stroke="#000" stroke-width="0.2"  xml:space="preserve"> + msg.getOriginatingAddress   +</text>
<text x="807.23" y="563.00" textLength="6.08" lengthAdjust="spacingAndGlyphs" font-family="Liberation Mono" font-size="16" fill="#000" stroke="#000" stroke-width="0.2" >(</text>
<text x="813.30" y="563.00" textLength="6.08" lengthAdjust="spacingAndGlyphs" font-family="Liberation Mono" font-size="16" fill="#000" stroke="#000" stroke-width="0.2" >)</text>
<text x="448.80" y="584.50" textLength="6.08" lengthAdjust="spacingAndGlyphs" font-family="Liberation Mono" font-size="16" fill="#2f8c22" stroke="#2f8c22" stroke-width="0.25" font-weight="bold" xml:space="preserve">&quot;</text>
<text x="454.88" y="584.50" textLength="12.15" lengthAdjust="spacingAndGlyphs" font-family="Liberation Mono" font-size="16" fill="#000080" stroke="#000080" stroke-width="0.25" font-weight="bold" xml:space="preserve">\n</text>
<text x="467.02" y="584.50" textLength="54.68" lengthAdjust="spacingAndGlyphs" font-family="Liberation Mono" font-size="16" fill="#2f8c22" stroke="#2f8c22" stroke-width="0.25" font-weight="bold" xml:space="preserve">Message:&quot;</text>
<text x="521.70" y="584.50" textLength="194.40" lengthAdjust="spacingAndGlyphs" font-family="Liberation Mono" font-size="16" fill="#000" stroke="#000" stroke-width="0.2"  xml:space="preserve"> + msg.getDisplayMessageBody   +</text>
<text x="691.80" y="583.00" textLength="6.08" lengthAdjust="spacingAndGlyphs" font-family="Liberation Mono" font-size="16" fill="#000" stroke="#000" stroke-width="0.2" >(</text>
<text x="697.88" y="583.00" textLength="6.08" lengthAdjust="spacingAndGlyphs" font-family="Liberation Mono" font-size="16" fill="#000" stroke="#000" stroke-width="0.2" >)</text>
<text x="448.80" y="604.50" textLength="6.08" lengthAdjust="spacingAndGlyphs" font-family="Liberation Mono" font-size="16" fill="#2f8c22" stroke="#2f8c22" stroke-width="0.25" font-weight="bold" xml:space="preserve">&quot;</text>
<text x="454.88" y="604.50" textLength="12.15" lengthAdjust="spacingAndGlyphs" font-family="Liberation Mono" font-size="16" fill="#000080" stroke="#000080" stroke-width="0.25" font-weight="bold" xml:space="preserve">\n</text>
<text x="467.02" y="604.50" textLength="48.60" lengthAdjust="spacingAndGlyphs" font-family="Liberation Mono" font-size="16" fill="#2f8c22" stroke="#2f8c22" stroke-width="0.25" font-weight="bold" xml:space="preserve"> Time: &quot;</text>
<text x="515.62" y="604.50" textLength="133.65" lengthAdjust="spacingAndGlyphs" font-family="Liberation Mono" font-size="16" fill="#000" stroke="#000" stroke-width="0.2"  xml:space="preserve"> + receiveTime, Toast.</text>
<text x="649.28" y="604.50" textLength="66.83" lengthAdjust="spacingAndGlyphs" font-family="Liberation Mono" font-size="16" fill="#5b2d96" stroke="#5b2d96" stroke-width="0.25" font-weight="bold" font-style="italic" xml:space="preserve">LENGTH_LONG</text>
<text x="716.10" y="604.50" textLength="54.68" lengthAdjust="spacingAndGlyphs" font-family="Liberation Mono" font-size="16" fill="#000" stroke="#000" stroke-width="0.2"  xml:space="preserve"> .show  ;</text>
<text x="716.10" y="603.00" textLength="6.08" lengthAdjust="spacingAndGlyphs" font-family="Liberation Mono" font-size="16" fill="#000" stroke="#000" stroke-width="0.2" >)</text>
<text x="752.55" y="603.00" textLength="6.08" lengthAdjust="spacingAndGlyphs" font-family="Liberation Mono" font-size="16" fill="#000" stroke="#000" stroke-width="0.2" >(</text>
<text x="758.62" y="603.00" textLength="6.08" lengthAdjust="spacingAndGlyphs" font-family="Liberation Mono" font-size="16" fill="#000" stroke="#000" stroke-width="0.2" >)</text>
<text x="375.90" y="622.10" textLength="6.08" lengthAdjust="spacingAndGlyphs" font-family="Liberation Mono" font-size="16" fill="#000" stroke="#000" stroke-width="0.2" >}</text>
<text x="351.60" y="642.10" textLength="6.08" lengthAdjust="spacingAndGlyphs" font-family="Liberation Mono" font-size="16" fill="#000" stroke="#000" stroke-width="0.2" >}</text>
<text x="327.30" y="662.10" textLength="6.08" lengthAdjust="spacingAndGlyphs" font-family="Liberation Mono" font-size="16" fill="#000" stroke="#000" stroke-width="0.2" >}</text>
<text x="303.00" y="682.10" textLength="6.08" lengthAdjust="spacingAndGlyphs" font-family="Liberation Mono" font-size="16" fill="#000" stroke="#000" stroke-width="0.2" >}</text>
<path d="M645 446.3 l1.9 1 l1.9 -1 l1.9 1 l1.9 -1 l1.9 1 l1.9 -1 l1.9 1 l1.9 -1 l1.9 1 l1.9 -1 l1.9 1" fill="none" stroke="#c8c0a8" stroke-width="0.8"/>
<rect x="303.2" y="687.6" width="1.8" height="5.6" fill="#111" /></svg></body></html>
